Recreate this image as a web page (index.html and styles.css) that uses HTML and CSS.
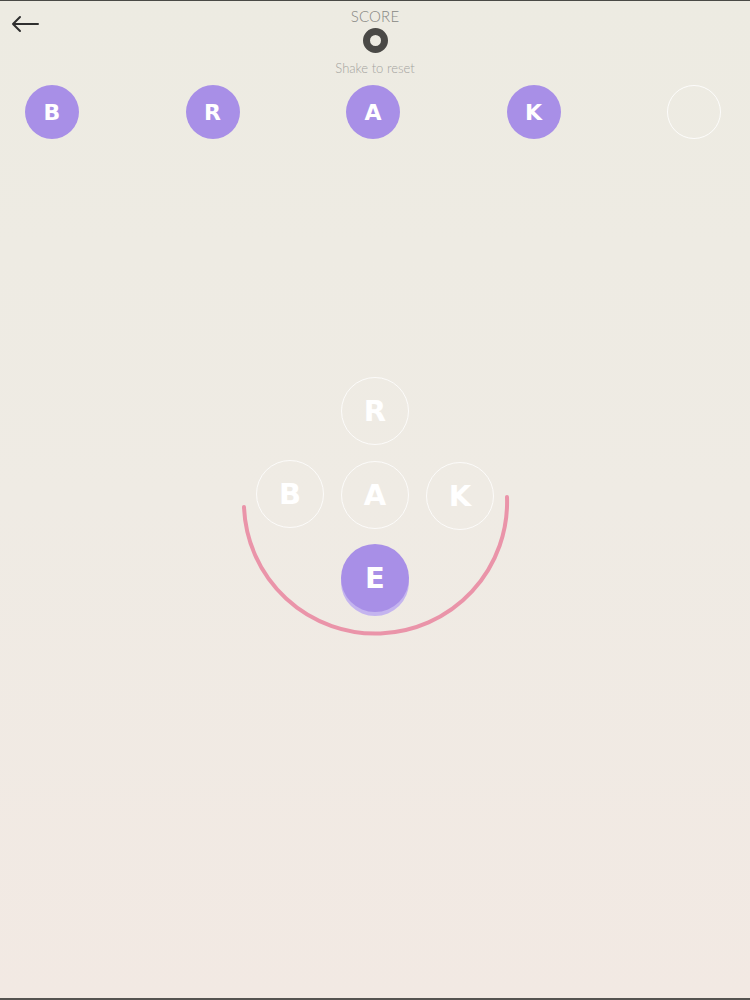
FILE: index.html
```html
<!DOCTYPE html>
<html>
<head>
<meta charset="utf-8">
<link rel="stylesheet" href="styles.css">
</head>
<body>
<div class="screen">
  <header class="topbar">
    <div class="back">
      <svg width="30" height="18" viewBox="0 0 30 18"><path d="M28 9 H3 M10 2 L3 9 L10 16" fill="none" stroke="#2f2f2f" stroke-width="2" stroke-linecap="round" stroke-linejoin="round"/></svg>
    </div>
    <div class="score">
      <div class="score-label">SCORE</div>
      <div class="score-ring"></div>
      <div class="score-hint">Shake to reset</div>
    </div>
    <div></div>
  </header>
  <div class="slots">
    <div class="slot filled">B</div>
    <div class="slot filled">R</div>
    <div class="slot filled">A</div>
    <div class="slot filled">K</div>
    <div class="slot empty"></div>
  </div>
  <div class="board">
    <svg class="arc" width="750" height="300" viewBox="0 0 750 300"><path d="M244 137 A131.5 131.5 0 0 0 507 127" fill="none" stroke="#ea94a9" stroke-width="4" stroke-linecap="round"/></svg>
    <div class="tile outline t-r">R</div>
    <div class="tile outline t-b">B</div>
    <div class="tile outline t-a">A</div>
    <div class="tile outline t-k">K</div>
    <div class="tile solid t-e">E</div>
  </div>
</div>
</body>
</html>
```
FILE: styles.css
```css
html, body {
  margin: 0;
  padding: 0;
}
body {
  width: 750px;
  height: 1000px;
  overflow: hidden;
  font-family: "Open Sans", "Liberation Sans", sans-serif;
}
.screen {
  box-sizing: border-box;
  width: 750px;
  height: 1000px;
  border-top: 1px solid #4a4a46;
  border-bottom: 2px solid #555350;
  background: linear-gradient(180deg, #edebe2 0%, #efebe4 50%, #f2e9e3 100%);
}
.topbar {
  display: grid;
  grid-template-columns: 1fr auto 1fr;
  align-items: start;
  height: 84px;
}
.back {
  padding: 14px 0 0 10px;
  line-height: 0;
}
.score {
  display: flex;
  flex-direction: column;
  align-items: center;
  padding-top: 6px;
}
.score-label {
  font-family: "Lato", "Liberation Sans", sans-serif;
  font-weight: 300;
  font-size: 15px;
  line-height: 18px;
  color: #878782;
  letter-spacing: 0.2px;
}
.score-ring {
  box-sizing: border-box;
  width: 25px;
  height: 25px;
  margin-top: 3px;
  border-radius: 50%;
  border: 7.5px solid #4a4946;
}
.score-hint {
  margin-top: 8px;
  font-family: "Lato", "Liberation Sans", sans-serif;
  font-weight: 300;
  font-size: 13px;
  line-height: 15px;
  color: #a4a39e;
}
.slots {
  display: flex;
  justify-content: space-between;
  padding: 0 29px 0 25px;
}
.slot {
  box-sizing: border-box;
  width: 54px;
  height: 54px;
  border-radius: 50%;
  display: flex;
  align-items: center;
  justify-content: center;
  color: #fff;
  font-family: "DejaVu Sans", "Open Sans", sans-serif;
  font-weight: bold;
  font-size: 22px;
}
.slot.filled {
  background: #a88fe7;
}
.slot.empty {
  border: 1.5px solid rgba(255, 255, 255, 0.85);
}
.board {
  position: relative;
  margin-top: 231px;
  width: 750px;
  height: 300px;
}
.arc {
  position: absolute;
  left: 0;
  top: 0;
}
.tile {
  position: absolute;
  box-sizing: border-box;
  width: 68px;
  height: 68px;
  border-radius: 50%;
  display: flex;
  align-items: center;
  justify-content: center;
  color: #fff;
  font-family: "DejaVu Sans", "Open Sans", sans-serif;
  font-weight: bold;
  font-size: 29px;
}
.tile.outline {
  border: 1.5px solid rgba(255, 255, 255, 0.8);
}
.tile.solid {
  background: #a88fe7;
  box-shadow: 0 4px 0 #c4b4ef;
  z-index: 1;
}
.t-r { left: 341px; top: 7px; }
.t-b { left: 256px; top: 90px; }
.t-a { left: 341px; top: 91px; }
.t-k { left: 426px; top: 92px; }
.t-e { left: 341px; top: 174px; }
```
